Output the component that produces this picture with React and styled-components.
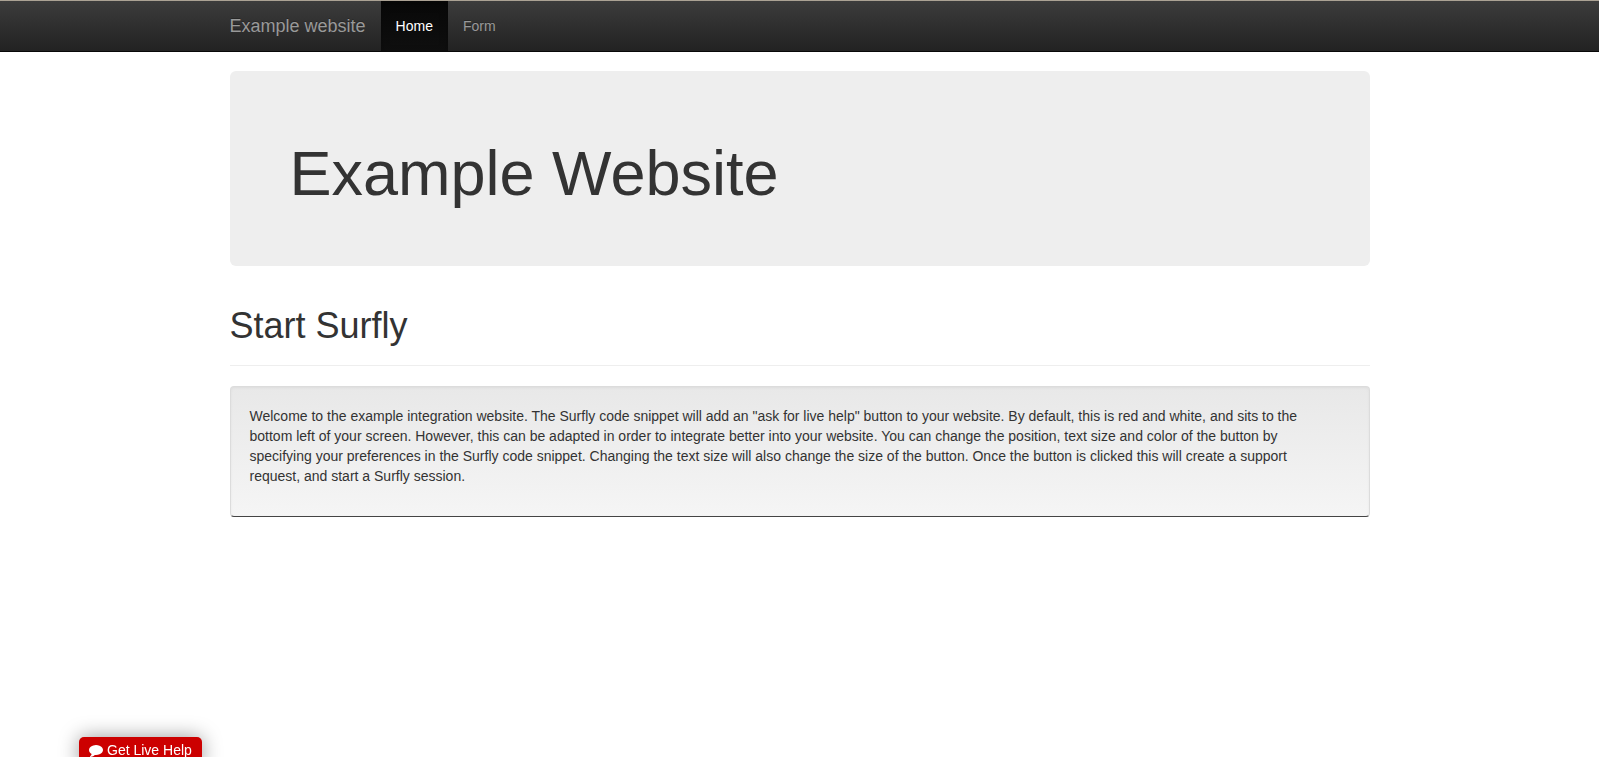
import React from "react";
import styled, { createGlobalStyle } from "styled-components";

const GlobalStyle = createGlobalStyle`
  *, *::before, *::after { box-sizing: border-box; }
  body {
    margin: 0;
    background: #fff;
    color: #333;
    font-family: "Liberation Sans", Arial, sans-serif;
    font-size: 14px;
    line-height: 20px;
  }
`;

const Container = styled.div`
  max-width: 1170px;
  margin: 0 auto;
  padding: 0 15px;
`;

const Navbar = styled.header`
  border-top: 1px solid #aba294;
  border-bottom: 1px solid #080808;
  background: linear-gradient(to bottom, #3c3c3c 0%, #222 100%);
`;

const Nav = styled.nav`
  display: flex;
`;

const Brand = styled.a`
  padding: 15px 15px 15px 0;
  color: #999;
  font-size: 18px;
  line-height: 20px;
  text-decoration: none;
  text-shadow: 0 -1px 0 rgba(0, 0, 0, 0.25);
`;

const NavLink = styled.a`
  padding: 15px;
  color: ${(p) => (p.$active ? "#fff" : "#999")};
  font-size: 14px;
  text-decoration: none;
  text-shadow: 0 -1px 0 rgba(0, 0, 0, 0.25);
  ${(p) =>
    p.$active &&
    `
    background: linear-gradient(to bottom, #080808 0%, #0f0f0f 100%);
    box-shadow: inset 0 3px 9px rgba(0, 0, 0, 0.25);
  `}
`;

const Jumbotron = styled.section`
  margin: 19px 0 40px;
  padding: 68px 60px 58px;
  border-radius: 6px;
  background: #eee;
`;

const Title = styled.h1`
  margin: 0;
  font-size: 63px;
  font-weight: 400;
  line-height: 69px;
`;

const SectionTitle = styled.h2`
  margin: 0 0 20px;
  padding-bottom: 19px;
  border-bottom: 1px solid #eee;
  font-size: 36px;
  font-weight: 400;
  line-height: 40px;
`;

const Well = styled.section`
  padding: 19px 19px 30px;
  border: 1px solid #dcdcdc;
  border-bottom-color: #444;
  border-radius: 4px;
  background: linear-gradient(to bottom, #e8e8e8 0%, #f5f5f5 100%);
  box-shadow: inset 0 1px 3px rgba(0, 0, 0, 0.05), 0 1px 0 rgba(255, 255, 255, 0.1);
`;

const Copy = styled.p`
  margin: 0;
`;

const HelpButton = styled.button`
  position: fixed;
  left: 79px;
  bottom: -10px;
  display: flex;
  align-items: center;
  gap: 4px;
  height: 30px;
  padding: 0 10px 4px;
  border: 0;
  border-radius: 5px;
  background: #c00;
  color: #fff;
  font-family: inherit;
  font-size: 14px;
  box-shadow: 0 0 20px rgba(0, 0, 0, 0.4);
  cursor: pointer;
`;

const CommentIcon = () => (
  <svg width="14" height="14" viewBox="0 0 1792 1792" fill="currentColor" aria-hidden="true">
    <path d="M1792 896q0 174-120 321.5t-326 233-450 85.5q-70 0-145-8-198 175-460 242-49 14-114 22-17 2-30.5-9t-17.5-29v-1q-3-4-.5-12t2-10 4.5-9.5l6-9 7-8.5 8-9q7-8 31-34.5t34.5-38 31-39.5 32.5-51 27-59 26-76q-157-89-247.5-220t-90.5-281q0-130 71-248.5t191-204.5 286-136.5 348-50.5q244 0 450 85.5t326 233 120 321.5z" />
  </svg>
);

export default function App() {
  return (
    <>
      <GlobalStyle />
      <Navbar>
        <Container>
          <Nav>
            <Brand href="#">Example website</Brand>
            <NavLink href="#home" $active aria-current="page">Home</NavLink>
            <NavLink href="#form">Form</NavLink>
          </Nav>
        </Container>
      </Navbar>
      <Container as="main">
        <Jumbotron>
          <Title>Example Website</Title>
        </Jumbotron>
        <SectionTitle>Start Surfly</SectionTitle>
        <Well>
          <Copy>
            Welcome to the example integration website. The Surfly code snippet will add an "ask for live help" button to your website. By default, this is red and white, and sits to the<br />
            bottom left of your screen. However, this can be adapted in order to integrate better into your website. You can change the position, text size and color of the button by<br />
            specifying your preferences in the Surfly code snippet. Changing the text size will also change the size of the button. Once the button is clicked this will create a support<br />
            request, and start a Surfly session.
          </Copy>
        </Well>
      </Container>
      <HelpButton type="button">
        <CommentIcon />
        Get Live Help
      </HelpButton>
    </>
  );
}
